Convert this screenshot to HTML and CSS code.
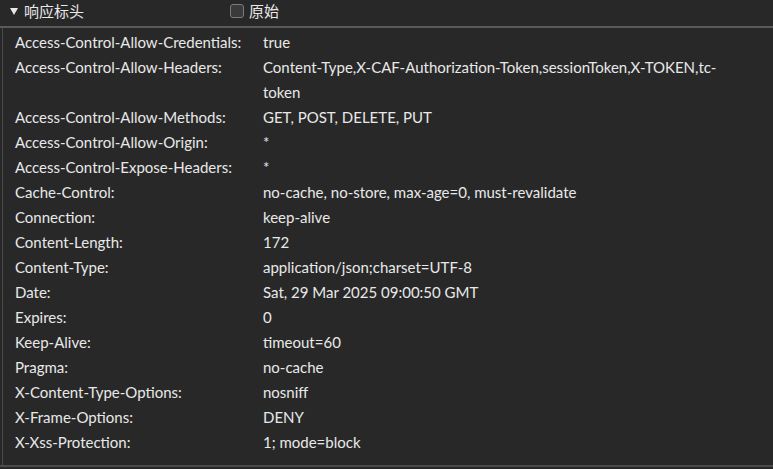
FILE: index.html
```html
<!DOCTYPE html>
<html lang="zh-CN">
<head>
    <meta charset="UTF-8">
    <title>响应标头</title>
    <link rel="stylesheet" href="styles.css">
</head>
<body>
    <div class="panel">
        <div class="panel-head">
            <div class="title"><span class="caret"></span>响应标头</div>
            <label class="raw"><span class="box"></span>原始</label>
        </div>
        <div class="headers">
            <div class="name">Access-Control-Allow-Credentials:</div><div class="value">true</div>
            <div class="name">Access-Control-Allow-Headers:</div><div class="value">Content-Type,X-CAF-Authorization-Token,sessionToken,X-TOKEN,tc-token</div>
            <div class="name">Access-Control-Allow-Methods:</div><div class="value">GET, POST, DELETE, PUT</div>
            <div class="name">Access-Control-Allow-Origin:</div><div class="value">*</div>
            <div class="name">Access-Control-Expose-Headers:</div><div class="value">*</div>
            <div class="name">Cache-Control:</div><div class="value">no-cache, no-store, max-age=0, must-revalidate</div>
            <div class="name">Connection:</div><div class="value">keep-alive</div>
            <div class="name">Content-Length:</div><div class="value">172</div>
            <div class="name">Content-Type:</div><div class="value">application/json;charset=UTF-8</div>
            <div class="name">Date:</div><div class="value">Sat, 29 Mar 2025 09:00:50 GMT</div>
            <div class="name">Expires:</div><div class="value">0</div>
            <div class="name">Keep-Alive:</div><div class="value">timeout=60</div>
            <div class="name">Pragma:</div><div class="value">no-cache</div>
            <div class="name">X-Content-Type-Options:</div><div class="value">nosniff</div>
            <div class="name">X-Frame-Options:</div><div class="value">DENY</div>
            <div class="name">X-Xss-Protection:</div><div class="value">1; mode=block</div>
        </div>
    </div>
</body>
</html>
```

FILE: styles.css
```css
html, body { margin: 0; background: #282828; }
body {
    font-family: Lato, "Noto Sans CJK SC", sans-serif;
    font-size: 15px;
    color: #e8e8e8;
    width: 773px;
    height: 469px;
    overflow: hidden;
}
.panel { height: 467px; border-bottom: 2px solid #4a4a4a; box-sizing: border-box; }
.panel-head {
    display: flex;
    align-items: flex-start;
    padding: 0 0 0 10px;
    border-bottom: 2px solid #5a5a5a;
    box-sizing: border-box;
    height: 28px;
    font-family: "Noto Sans CJK SC", sans-serif;
    font-size: 15px;
    line-height: 22px;
}
.title { display: flex; align-items: center; width: 220px; }
.caret {
    width: 0; height: 0;
    border-left: 4px solid transparent;
    border-right: 4px solid transparent;
    border-top: 7px solid #e8e8e8;
    margin-right: 6px;
}
.raw { display: flex; align-items: center; }
.box {
    width: 12px; height: 12px;
    border: 1px solid #7a7a7a;
    border-radius: 3px;
    background: #3a3a3a;
    margin-right: 5px;
}
.headers {
    display: grid;
    grid-template-columns: 248px 460px;
    align-content: start;
    margin-left: 2px;
    border-left: 1px solid #4a4a4a;
    padding: 2px 0 0 12px;
    height: 437px;
    line-height: 25px;
}
.value { overflow-wrap: break-word; }
```
